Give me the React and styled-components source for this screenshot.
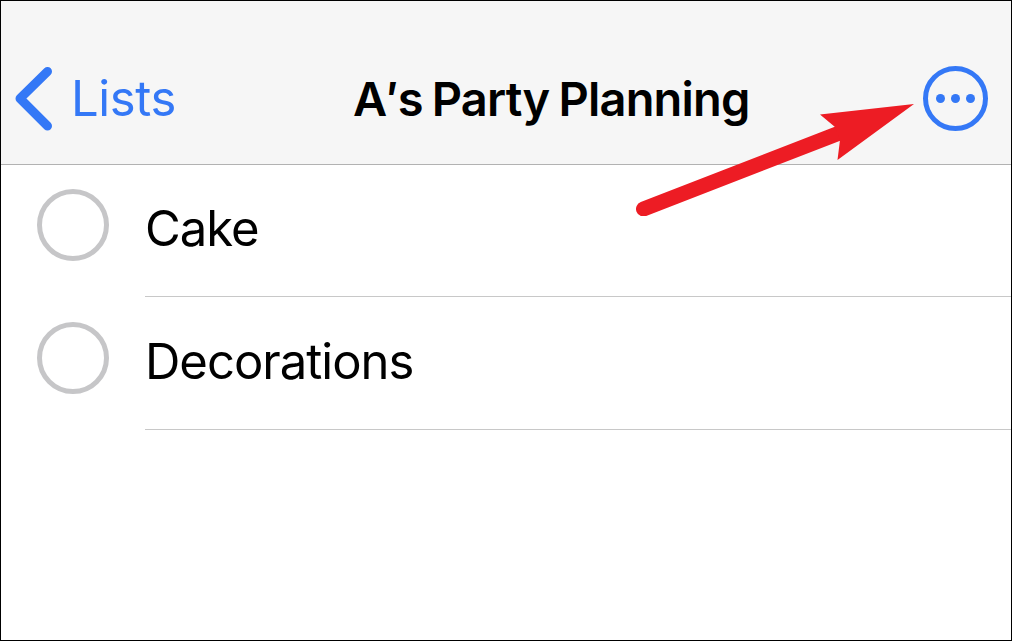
import React from 'react'
import styled, { createGlobalStyle } from 'styled-components'

const items = ['Cake', 'Decorations']

function App() {
    return (
        <Screen>
            <GlobalStyle />
            <Header>
                <Back>
                    <Chevron viewBox="0 0 38 64">
                        <path d="M32.5 5.5 L5 32.5 L32.5 60" />
                    </Chevron>
                    <BackText>Lists</BackText>
                </Back>
                <Title>A′s Party Planning</Title>
                <More aria-label="More">
                    <Dot />
                    <Dot />
                    <Dot />
                </More>
            </Header>
            <List>
                {items.map(item => (
                    <Row key={item}>
                        <Check />
                        <ItemText>{item}</ItemText>
                    </Row>
                ))}
            </List>
            <Arrow viewBox="0 0 282 116">
                <path d="M8.5 109 L207 32" stroke="#ed1c24" strokeWidth="15" strokeLinecap="round" />
                <path d="M279 4 L185 14.5 L200 27 L205 40 L202.5 60 Z" fill="#ed1c24" />
            </Arrow>
        </Screen>
    )
}

export default App

const GlobalStyle = createGlobalStyle`
body {
    margin: 0;
}
* {
    box-sizing: border-box;
}
`

const Screen = styled.div`
position: relative;
width: 1012px;
height: 641px;
border: 1px solid black;
background-color: white;
color: black;
font-family: Inter, "Liberation Sans", sans-serif;
overflow: hidden;
`

const Header = styled.header`
display: flex;
align-items: flex-start;
height: 164px;
padding-top: 65px;
background-color: #f6f6f6;
border-bottom: 1px solid #b2b2b2;
`

const Back = styled.div`
display: flex;
width: 352px;
padding-left: 14px;
color: #3478f6;
`

const Chevron = styled.svg`
width: 38px;
height: 64px;
fill: none;
stroke: currentColor;
stroke-width: 9px;
stroke-linecap: round;
stroke-linejoin: round;
overflow: visible;
`

const BackText = styled.span`
margin-left: 18px;
font-size: 49px;
letter-spacing: -0.4px;
line-height: 66px;
white-space: nowrap;
`

const Title = styled.h1`
margin: 0;
font-size: 47px;
font-weight: 600;
letter-spacing: -0.8px;
word-spacing: -2px;
line-height: 66px;
white-space: nowrap;
`

const More = styled.div`
display: flex;
justify-content: center;
align-items: center;
gap: 6px;
width: 65px;
height: 65px;
margin-left: auto;
margin-right: 23px;
border: 5px solid #3478f6;
border-radius: 50%;
`

const Dot = styled.div`
width: 9px;
height: 9px;
border-radius: 50%;
background-color: #3478f6;
`

const List = styled.div`
display: flex;
flex-direction: column;
gap: 1px;
`

const Row = styled.div`
display: flex;
height: 132px;
padding-left: 36px;
`

const Check = styled.div`
width: 72px;
height: 72px;
margin-top: 24px;
border: 5px solid #c6c6c8;
border-radius: 50%;
`

const ItemText = styled.div`
flex: 1;
margin-left: 36px;
padding-top: 32px;
border-bottom: 1px solid #c8c8c8;
font-size: 49px;
letter-spacing: -1px;
line-height: 64px;
`

// sits over the header and the first row
const Arrow = styled.svg`
position: absolute;
left: 634px;
top: 99px;
width: 282px;
height: 116px;
`
